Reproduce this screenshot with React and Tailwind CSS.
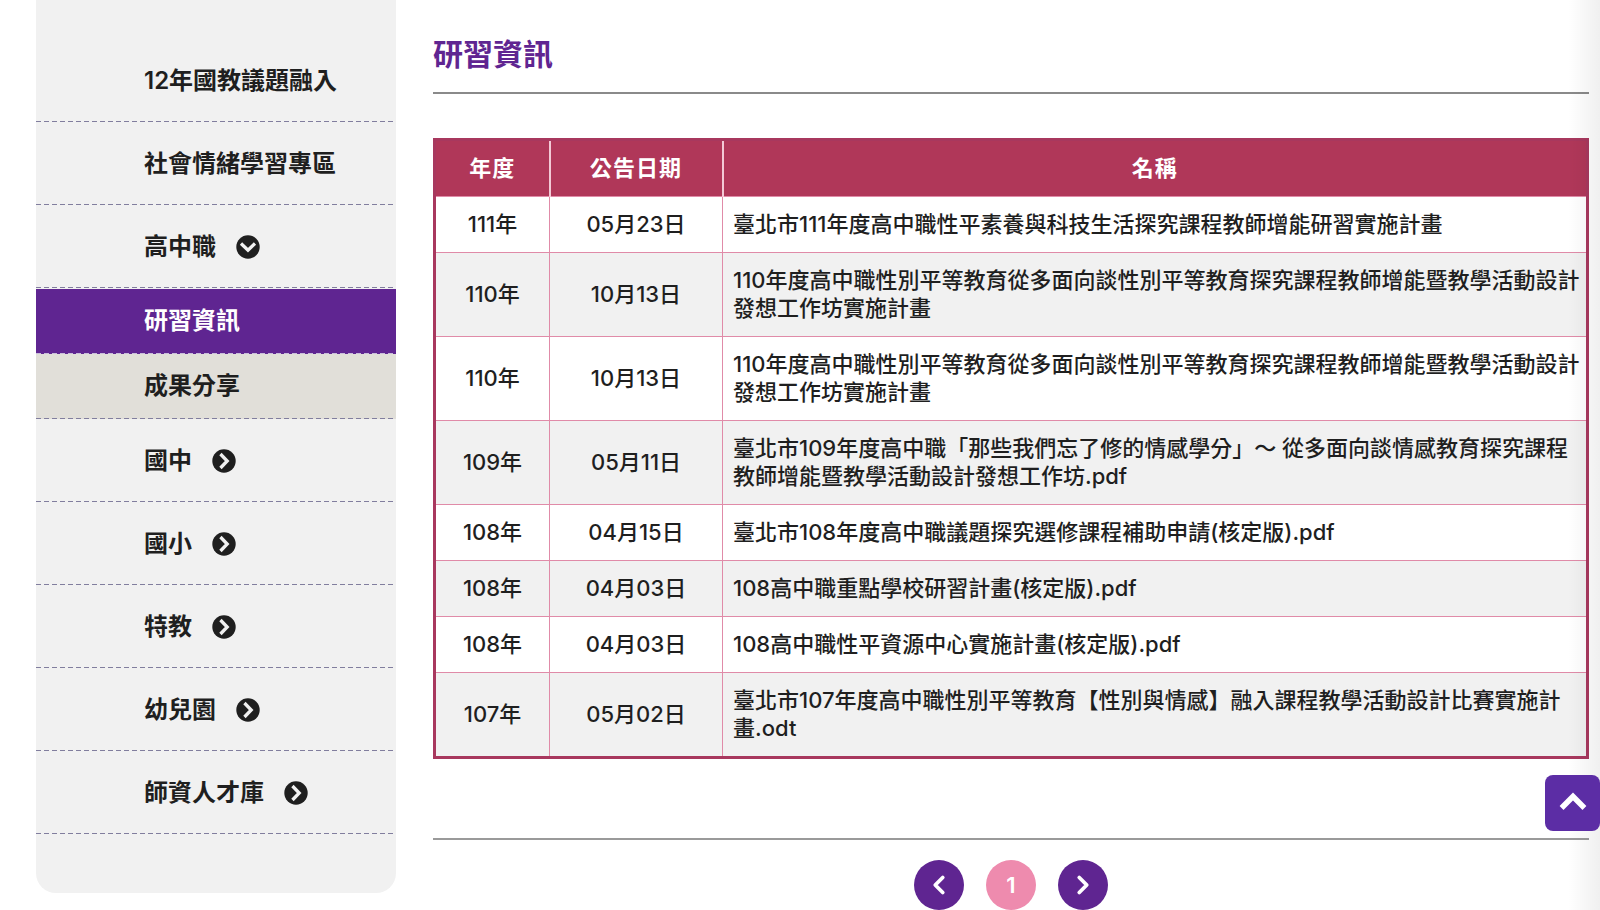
import { useState } from 'react';
import { ChevronLeft, ChevronRight } from 'lucide-react';

const menu = [
  { label: '12年國教議題融入' },
  { label: '社會情緒學習專區' },
  { label: '高中職', children: ['研習資訊', '成果分享'] },
  { label: '國中', children: [] },
  { label: '國小', children: [] },
  { label: '特教', children: [] },
  { label: '幼兒園', children: [] },
  { label: '師資人才庫', children: [] },
];

const rows = [
  { year: '111年', date: '05月23日', name: '臺北市111年度高中職性平素養與科技生活探究課程教師增能研習實施計畫' },
  { year: '110年', date: '10月13日', name: '110年度高中職性別平等教育從多面向談性別平等教育探究課程教師增能暨教學活動設計發想工作坊實施計畫' },
  { year: '110年', date: '10月13日', name: '110年度高中職性別平等教育從多面向談性別平等教育探究課程教師增能暨教學活動設計發想工作坊實施計畫' },
  { year: '109年', date: '05月11日', name: '臺北市109年度高中職「那些我們忘了修的情感學分」～ 從多面向談情感教育探究課程教師增能暨教學活動設計發想工作坊.pdf' },
  { year: '108年', date: '04月15日', name: '臺北市108年度高中職議題探究選修課程補助申請(核定版).pdf' },
  { year: '108年', date: '04月03日', name: '108高中職重點學校研習計畫(核定版).pdf' },
  { year: '108年', date: '04月03日', name: '108高中職性平資源中心實施計畫(核定版).pdf' },
  { year: '107年', date: '05月02日', name: '臺北市107年度高中職性別平等教育【性別與情感】融入課程教學活動設計比賽實施計畫.odt' },
];

// dashed rule along the bottom of every menu entry
const dashed = 'bg-[linear-gradient(to_right,#817e9e_5px,transparent_5px)] bg-[length:8px_1px] bg-repeat-x bg-bottom';
const dashedLight = 'bg-[linear-gradient(to_right,#c9bddb_5px,transparent_5px)] bg-[length:8px_1px] bg-repeat-x bg-bottom';

const CircleChevron = ({ down }) => (
  <svg viewBox="0 0 24 24" className={`size-6 ${down ? 'rotate-90' : ''}`} aria-hidden="true">
    <circle cx="12" cy="12" r="11.7" fill="currentColor" />
    <path d="M9.6 6.2 15.2 12l-5.6 5.8" fill="none" stroke="#f1f1f1" strokeWidth="3.3" strokeLinecap="square" />
  </svg>
);

const MenuItem = ({ item, open, onToggle }) => (
  <li>
    {item.children ? (
      <button
        type="button"
        onClick={onToggle}
        aria-expanded={open}
        className={`flex w-full items-center gap-5 pt-6 pb-[23px] pl-[108px] text-left leading-9 ${dashed}`}
      >
        {item.label}
        <CircleChevron down={open} />
      </button>
    ) : (
      <a href="#" className={`block pt-6 pb-[23px] pl-[108px] leading-9 ${dashed}`}>
        {item.label}
      </a>
    )}
    {open && item.children && (
      <ul className="pt-px">
        {item.children.map((child, i) => (
          <li key={child}>
            <a
              href="#"
              className={`block pt-3.5 pb-[15px] pl-[108px] leading-9 ${
                i === 0 ? `bg-[#5f2591] text-white ${dashedLight}` : `bg-[#e1dfd9] ${dashed}`
              }`}
            >
              {child}
            </a>
          </li>
        ))}
      </ul>
    )}
  </li>
);

export default function App() {
  const [openItem, setOpenItem] = useState('高中職');

  return (
    <div className="relative flex min-h-screen items-start overflow-x-hidden bg-white pr-[11px] pl-9 font-['Inter','Noto_Sans_CJK_TC',sans-serif] font-medium text-[#1f1f1f]">
      {/* Side menu */}
      <nav className="w-[360px] shrink-0 rounded-b-[20px] bg-[#f1f1f1] pt-[39px] pb-[59px] text-2xl font-semibold">
        <ul>
          {menu.map((item) => (
            <MenuItem
              key={item.label}
              item={item}
              open={openItem === item.label}
              onToggle={() => setOpenItem(openItem === item.label ? '' : item.label)}
            />
          ))}
        </ul>
      </nav>

      {/* Content */}
      <main className="ml-[37px] min-w-0 flex-1">
        <h1 className="border-b-2 border-[#8a8a8a] pt-8 pb-[15px] text-[30px] leading-[45px] font-bold text-[#5f2591]">研習資訊</h1>

        <table className="mt-11 w-full border-collapse border-3 border-[#a8385e] text-[22px] leading-7">
          <thead>
            <tr className="bg-[#b03759] font-bold tracking-wider text-white">
              <th className="w-[115px] border-r-2 border-[#f3c9d6] pt-[13px] pb-[14px]">年度</th>
              <th className="w-[173px] border-r-2 border-[#f3c9d6] pt-[13px] pb-[14px]">公告日期</th>
              <th className="pt-[13px] pb-[14px]">名稱</th>
            </tr>
          </thead>
          <tbody>
            {rows.map((row, i) => (
              <tr key={i} className="even:bg-[#f1f1f1]">
                <td className="border border-[#e08ba8] pt-[13px] pb-[14px] text-center">{row.year}</td>
                <td className="border border-[#e08ba8] pt-[13px] pb-[14px] text-center">{row.date}</td>
                <td className="border border-[#e08ba8] pt-[13px] pr-1 pb-[14px] pl-[10px]">
                  <a href="#">{row.name}</a>
                </td>
              </tr>
            ))}
          </tbody>
        </table>

        {/* Pagination */}
        <div className="mt-[79px] flex justify-center gap-[22px] border-t-2 border-[#9a9a9a] pt-5 text-white">
          <button type="button" aria-label="上一頁" className="flex size-[50px] items-center justify-center rounded-full bg-[#5f2591]">
            <ChevronLeft className="size-[30px]" strokeWidth={3} />
          </button>
          <button type="button" className="size-[50px] rounded-full bg-[#ee8bae] text-[22px] font-semibold">1</button>
          <button type="button" aria-label="下一頁" className="flex size-[50px] items-center justify-center rounded-full bg-[#5f2591]">
            <ChevronRight className="size-[30px]" strokeWidth={3} />
          </button>
        </div>
      </main>

      <div className="pointer-events-none absolute inset-y-0 right-0 w-8 bg-linear-to-r from-transparent to-black/6" />

      <button
        type="button"
        aria-label="回頁首"
        className="fixed right-0 bottom-[79px] flex h-14 w-[55px] items-center justify-center rounded-lg bg-[#5c2da5] text-white"
      >
        <svg viewBox="0 0 28 28" className="size-7" fill="none" aria-hidden="true">
          <path d="M4.500 17 14 7.500 23.500 17" stroke="currentColor" strokeWidth="5.5" strokeLinecap="square" />
        </svg>
      </button>
    </div>
  );
}
